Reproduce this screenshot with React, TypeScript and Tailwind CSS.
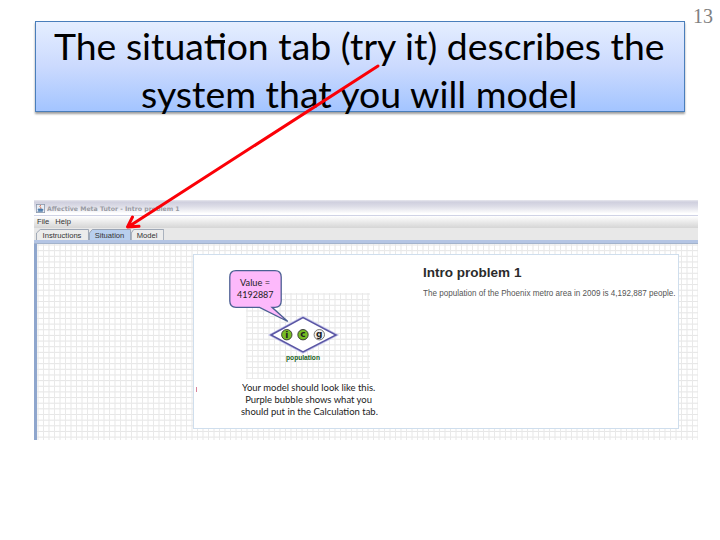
import type { ReactNode } from "react";

const GRID =
  "bg-[repeating-linear-gradient(to_right,transparent_0px,#e9e9e9_0.9px,#e9e9e9_1.1px,transparent_2px,transparent_5.5px),repeating-linear-gradient(to_bottom,transparent_0px,#e7e7e7_0.9px,#e7e7e7_1.1px,transparent_2px,transparent_5.65px)]";

function Line({ className, children }: { className: string; children: ReactNode }) {
  return <div className={`whitespace-nowrap ${className}`}>{children}</div>;
}

function Title() {
  return (
    <header className="ml-[35px] mt-[21px] h-[91px] w-[650px] shrink-0 border border-[#4a7ebb] bg-linear-to-b from-[#e5eeff] via-[#cbdafe] to-[#a3c4ff] font-['Lato','Liberation_Sans',sans-serif] text-[36.5px] leading-[48px] text-black shadow-[0_2px_2px_rgba(0,0,0,0.38)]">
      <Line className="ml-[18px] w-max origin-left scale-x-[1.024]">
        The situa
        <span className="relative">
          ti
          <span className="absolute left-[8px] top-[16px] h-[3px] w-[13px] bg-black" />
        </span>
        on tab (try it) describes the
      </Line>
      <Line className="ml-[105px] w-max origin-left scale-x-[1.026]">system that you will model</Line>
    </header>
  );
}

function JavaIcon() {
  return (
    <svg className="h-[9px] w-[9px]" viewBox="0 0 9 9">
      <rect x="0.4" y="0.4" width="8.2" height="8.2" fill="#e9eef5" stroke="#8b97ab" strokeWidth="0.8" />
      <path d="M4.8 1Q3 2.5 4.5 3.4T4.2 5" fill="none" stroke="#d46a4a" strokeWidth="0.9" />
      <path d="M2 5h4v1.8H2.6zM6 5.3h1v1H6M1.5 7.6h5.4" fill="#4b78aa" stroke="#4b78aa" strokeWidth="0.7" />
    </svg>
  );
}

function Tab({ label, className, active }: { label: string; className: string; active?: boolean }) {
  const fill = active ? "#b8cfee" : "#ececec";
  return (
    <div className={`relative h-[11px] ${className}`}>
      <svg className="absolute inset-0 h-full w-full" viewBox="0 0 50 11" preserveAspectRatio="none">
        <path d="M0.5 11V4L4 0.5H49.5V11" fill={fill} stroke="#8b97a8" strokeWidth="0.8" vectorEffect="non-scaling-stroke" />
      </svg>
      <span className="relative flex h-full items-center justify-center whitespace-nowrap pr-px pt-[2px]">{label}</span>
    </div>
  );
}

function Model() {
  return (
    <svg className="block h-[110px] w-[145px]" viewBox="228 268 145 110">
      <path
        d="M236 270.7H275Q281.2 270.7 281.2 277V301Q281.2 307.3 275 307.3H272L287.8 321.5L259.5 307.3H236Q229.8 307.3 229.8 301V277Q229.8 270.7 236 270.7Z"
        fill="#fdb9fb"
        stroke="#4b5f93"
        strokeWidth="1.3"
      />
      <path d="M271 335L303 317.5L336 335L303 352Z" fill="#fff" stroke="#c7c7ec" strokeWidth="3" />
      <path d="M271 335L303 317.5L336 335L303 352Z" fill="#fff" stroke="#5a56a4" strokeWidth="1.5" />
      <g stroke="#333" strokeWidth="0.9">
        <circle cx="286.8" cy="334.7" r="5.2" fill="#76bd24" />
        <circle cx="303" cy="334.7" r="5.2" fill="#76bd24" />
        <circle cx="319.3" cy="334.7" r="5.2" fill="#f2f2f2" stroke="#666" />
      </g>
      <g fontFamily="'DejaVu Sans', sans-serif" fontWeight="700" fontSize="9" textAnchor="middle" fill="#222">
        <text x="286.8" y="338">i</text>
        <text x="303" y="337.3">c</text>
        <text x="319.3" y="337">g</text>
      </g>
      <g fontFamily="Lato, sans-serif" fontSize="9" fill="#222" textAnchor="middle">
        <text x="255" y="286.3" textLength="30" lengthAdjust="spacingAndGlyphs">Value =</text>
        <text x="255.3" y="298.2" textLength="36.5" lengthAdjust="spacingAndGlyphs">4192887</text>
      </g>
      <text x="303" y="360.3" textAnchor="middle" fontFamily="Liberation Sans, sans-serif" fontWeight="700" fontSize="7.5" fill="#17601a" textLength="34" lengthAdjust="spacingAndGlyphs">
        population
      </text>
    </svg>
  );
}

export default function App() {
  return (
    <main className="relative flex h-[540px] w-[720px] flex-col overflow-hidden bg-white">
      <Title />
      <span className="absolute left-[693px] top-[4px] font-['Liberation_Serif',serif] text-[20px] leading-[24px] text-[#808080]">13</span>

      <section className="ml-[34px] mt-[88px] flex h-[240px] w-[664px] flex-col font-['Liberation_Sans',sans-serif] text-[7.6px] text-[#333]">
        <div className="flex h-[15px] shrink-0 items-center gap-[2px] bg-[linear-gradient(#e8e8ee,#cfcfde_14%,#dedee8_45%,#fff_90%)] pl-[2px] pt-[2px]">
          <JavaIcon />
          <span className="origin-left scale-x-[0.985] whitespace-nowrap font-['DejaVu_Sans',sans-serif] text-[6.3px] font-bold leading-[10px] text-[#999ba4]">
            Affective Meta Tutor - Intro problem 1
          </span>
        </div>
        <nav className="flex h-[13px] shrink-0 items-center gap-[6px] border-t border-[#d0d3e6] bg-linear-to-b from-white to-[#d5d5d5] pl-[3px]">
          <span>File</span>
          <span>Help</span>
        </nav>
        <div className="flex h-[12px] shrink-0 items-end bg-[#e8e8e8] pl-[2px]">
          <Tab label="Instructions" className="w-[53px]" />
          <Tab label="Situation" className="w-[42px]" active />
          <Tab label="Model" className="w-[33px]" />
        </div>
        <div className="h-[4px] shrink-0 border-b border-[#a3b3cc] bg-[#b4c5e4]" />
        <div className={`min-h-0 flex-1 border-l-[3px] border-[#8fa6cd] pl-[156px] pt-[10px] ${GRID}`}>
          <div className="flex h-[175px] w-[486px] border border-[#cfdeed] bg-white">
            <div className="relative w-[218px] shrink-0">
              <div className={`absolute left-[52px] top-[38px] h-[86px] w-[124px] ${GRID}`} />
              <span className="absolute left-[2px] top-[132px] h-[5px] w-px bg-[#d9829a]" />
              <div className="relative ml-[34px] mt-[13px]">
                <Model />
              </div>
              <div className="relative ml-[15px] mt-[4px] flex w-[200px] flex-col items-center font-['Lato',sans-serif] text-[9.2px] leading-[12px] text-[#222]">
                <Line className="w-max scale-x-[1.03]">Your model should look like this.</Line>
                <Line className="w-max scale-x-[1.03]">Purple bubble shows what you</Line>
                <Line className="w-max scale-x-[1.03]">should put in the Calculation tab.</Line>
              </div>
            </div>
            <div className="pl-[11px] pt-[10px]">
              <Line className="w-max origin-left scale-x-[1.04] text-[13px] font-bold leading-[16px] text-[#2b2b2b]">Intro problem 1</Line>
              <Line className="mt-[7px] w-max origin-left scale-x-[0.98] text-[8.25px] leading-[11px] text-[#555]">
                The population of the Phoenix metro area in 2009 is 4,192,887 people.
              </Line>
            </div>
          </div>
        </div>
      </section>

      <svg className="pointer-events-none absolute inset-0 h-full w-full" viewBox="0 0 720 540">
        <path d="M378 66L128 227M139 226.3L127.5 227L132.5 217" fill="none" stroke="#fb0007" strokeWidth="3" strokeLinecap="round" strokeLinejoin="round" />
      </svg>
    </main>
  );
}
